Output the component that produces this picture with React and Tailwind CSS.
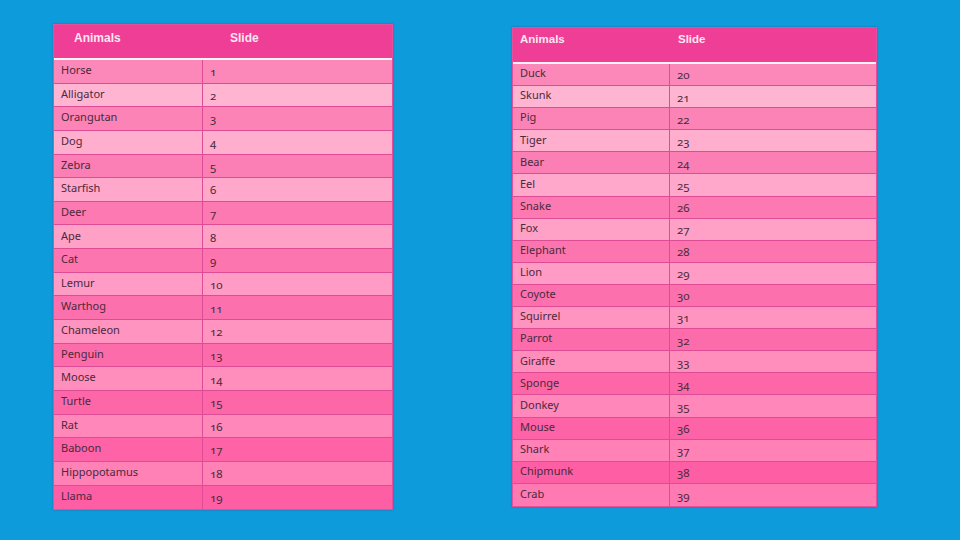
const rowColors = [
  "bg-[#fb88b8]", "bg-[#ffb5d2]",
  "bg-[#fb83b6]", "bg-[#ffaece]",
  "bg-[#fb7fb4]", "bg-[#ffa8cb]",
  "bg-[#fc7ab1]", "bg-[#ffa1c7]",
  "bg-[#fc75af]", "bg-[#ff9bc4]",
  "bg-[#fc71ad]", "bg-[#ff94c0]",
  "bg-[#fc6cab]", "bg-[#ff8ebd]",
  "bg-[#fd67a8]", "bg-[#ff87b9]",
  "bg-[#fd63a6]", "bg-[#ff81b6]",
  "bg-[#fd5ea4]", "bg-[#ff7ab2]",
]

const leftAnimals = [
  "Horse", "Alligator", "Orangutan", "Dog", "Zebra", "Starfish", "Deer", "Ape", "Cat", "Lemur",
  "Warthog", "Chameleon", "Penguin", "Moose", "Turtle", "Rat", "Baboon", "Hippopotamus", "Llama",
]

const rightAnimals = [
  "Duck", "Skunk", "Pig", "Tiger", "Bear", "Eel", "Snake", "Fox", "Elephant", "Lion",
  "Coyote", "Squirrel", "Parrot", "Giraffe", "Sponge", "Donkey", "Mouse", "Shark", "Chipmunk", "Crab",
]

function AnimalTable({ animals, start, wide }) {
  return (
    <div
      className={`flex flex-col border border-[#e2519a] shadow-[0_0_2px_rgba(120,0,60,0.35)] ${
        wide ? "w-[365px] mt-[3px]" : "w-[340px]"
      }`}
    >
      {/* header */}
      <div
        className={`flex bg-[#ef3e95] border-b-2 border-[#fff3f8] text-[#fde6f1] font-bold font-['Liberation_Sans',Arial,sans-serif] ${
          wide ? "h-[36px] pt-[3px] text-[11.5px]" : "h-[35px] pt-[4px] text-[12px]"
        }`}
      >
        <div className={wide ? "w-[157px] pl-[7px]" : "w-[149px] pl-[20px]"}>Animals</div>
        <div className={wide ? "pl-[8px]" : "pl-[27px]"}>Slide</div>
      </div>

      {/* rows */}
      {animals.map((name, i) => (
        <div
          key={name}
          className={`flex border-b border-[#de4c95] last:border-b-0 text-[11px] text-[#4a2a3b] font-['Noto_Sans',sans-serif] oldstyle-nums ${
            rowColors[i]
          } ${wide ? "h-[22.1px]" : "h-[23.65px]"}`}
        >
          <div
            className={`flex items-center pb-[2px] border-r border-[#de4c95] pl-[7px] ${
              wide ? "w-[157px]" : "w-[149px]"
            }`}
          >
            {name}
          </div>
          <div className="flex items-center pl-[7px] pt-[1px] text-[11.5px]">{start + i}</div>
        </div>
      ))}
    </div>
  )
}

export default function App() {
  return (
    <div className="w-[960px] h-[540px] bg-[#0d9bdc] overflow-hidden">
      <div className="flex items-start gap-[119px] pl-[53px] pt-[24px]">
        <AnimalTable animals={leftAnimals} start={1} />
        <AnimalTable animals={rightAnimals} start={20} wide />
      </div>
    </div>
  )
}
